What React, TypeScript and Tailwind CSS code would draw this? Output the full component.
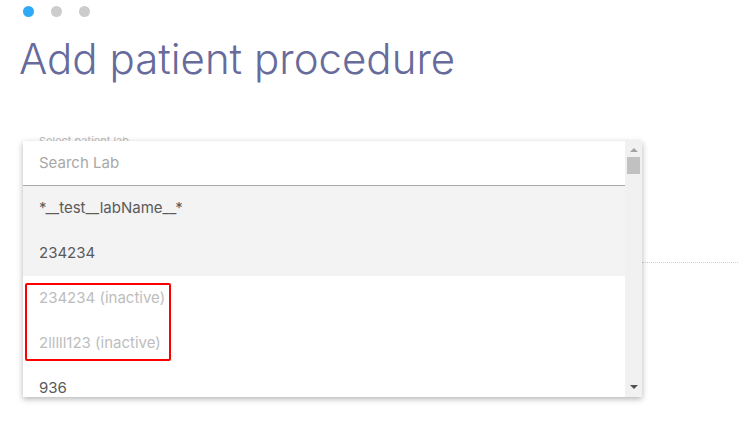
import React from 'react'

const labs = [
  { name: '*__test__labName__*', inactive: false, hover: true },
  { name: '234234', inactive: false, hover: true },
  { name: '234234 (inactive)', inactive: true, hover: false },
  { name: '2lllll123 (inactive)', inactive: true, hover: false },
  { name: '936', inactive: false, hover: false },
]

export default function App() {
  return (
    <div className="relative h-[421px] w-[738px] overflow-hidden bg-white font-['Inter',sans-serif]">
      <div className="flex gap-[17px] pl-[23px] pt-[6px]">
        <span className="h-[11px] w-[11px] rounded-full bg-[#2eaaf7]" />
        <span className="h-[11px] w-[11px] rounded-full bg-[#cccccc]" />
        <span className="h-[11px] w-[11px] rounded-full bg-[#cccccc]" />
      </div>
      <h1 className="mt-[18px] pl-[19px] text-[42px] font-light leading-[48px] text-[#676b9c]">
        Add patient procedure
      </h1>

      <div className="relative mt-[51px] pl-[39px]">
        <div className="text-[11px] leading-[14px] text-[#bbbbbb]">Select patient lab</div>
        <div className="ml-[603px] mt-[114px] border-b border-dotted border-[#cfcfcf]" />

        <div className="absolute left-[23px] top-[7px] flex h-[256px] w-[619px] overflow-hidden bg-white shadow-[0_2px_6px_rgba(0,0,0,0.3)]">
          <div className="flex min-w-0 flex-1 flex-col">
            <div className="flex h-[45px] shrink-0 items-center border-b border-[#a9a9a9] pl-[16px] text-[15px] text-[#a8a8a8]">
              Search Lab
            </div>
            {labs.map((l) => (
              <div
                key={l.name}
                className={
                  'flex h-[45px] shrink-0 items-center pl-[16px] text-[15px] ' +
                  (l.hover ? 'bg-[#f3f3f3] ' : 'bg-white ') +
                  (l.inactive ? 'text-[#bdbdbd]' : 'text-[#5a5a5a]')
                }
              >
                {l.name}
              </div>
            ))}
          </div>
          <div className="flex w-[17px] flex-col items-center bg-[#f1f1f1]">
            <span className="mt-[7px] h-0 w-0 border-x-[4px] border-b-[4px] border-x-transparent border-b-[#a3a3a3]" />
            <span className="mt-[5px] h-[17px] w-[13px] bg-[#c1c1c1]" />
            <span className="flex-1" />
            <span className="mb-[8px] h-0 w-0 border-x-[4px] border-t-[4px] border-x-transparent border-t-[#505050]" />
          </div>
        </div>

        <div className="absolute left-[25px] top-[149px] h-[78px] w-[146px] rounded-[2px] border-2 border-[#ff0000]" />
      </div>
    </div>
  )
}
